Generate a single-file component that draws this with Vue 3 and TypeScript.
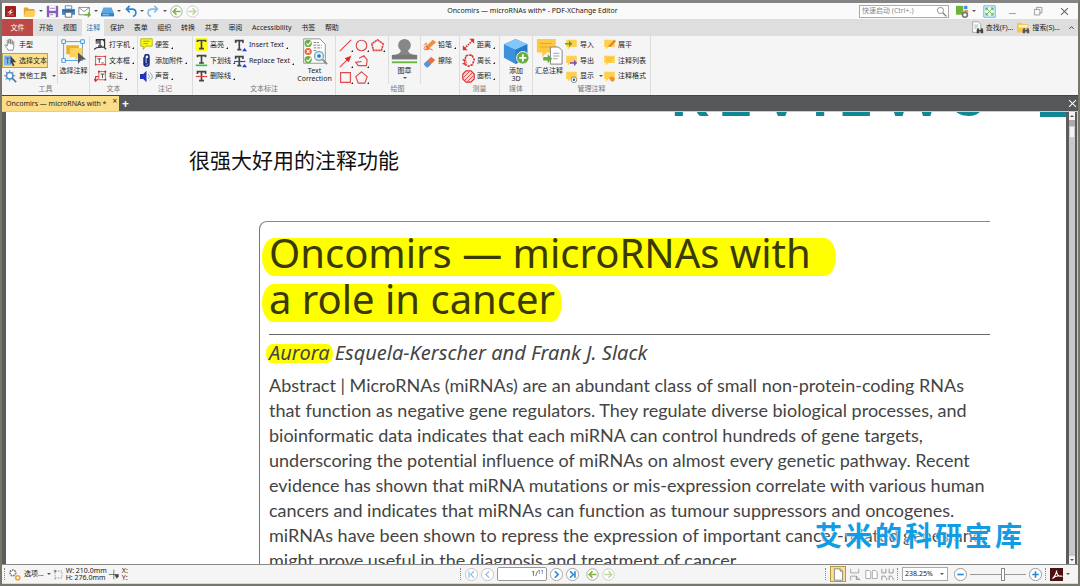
<script setup lang="ts">
import { ref } from 'vue'

interface Tool {
  icon: string
  label: string
  mark?: 'corner' | 'caret'
  active?: boolean
}

const note = 'M1.5 2h13v9h-8l-3 3v-3h-2z'
const icons: Record<string, string> = {
  logo: '<rect width="16" height="16" rx="1" fill="#a31f1c"/><path d="M3 10l8-6-3 5 5-1-8 5 3-4z" fill="#fff"/><path d="M3 13h10" stroke="#e88" />',
  folder: '<path d="M1 3h5l1 2h7v9H1z" fill="#e0a526"/><path d="M3 7h13l-3 7H1z" fill="#ffce55"/>',
  save: '<path d="M1 1h14v14H1z" fill="#8461b4"/><path d="M4 1h8v6H4zM4 10h8v5H4z" fill="#fff"/><path d="M5 12h4M5 4h6" stroke="#8461b4"/>',
  print: '<path d="M4 1h8v4H4z" fill="#fff" stroke="#3c78b4"/><path d="M0 5h16v7H0z" fill="#4684c4"/><path d="M4 9h8v6H4z" fill="#fff" stroke="#555"/><path d="M1 7h14" stroke="#204e80"/>',
  mail: '<path d="M1 3h13v9H1z" fill="#fff" stroke="#777"/><path d="M1 3l6.500 5L14 3" fill="none" stroke="#777"/><path d="M8 11h4V8l4 4-4 4v-3H8z" fill="#6fb043"/>',
  scan: '<path d="M3 3h10l3 7H0z" fill="#58a8e8"/><path d="M0 10h16v4H0z" fill="#2f7fc6"/><path d="M2 12h8" stroke="#bfe0ff"/>',
  undo: '<path d="M3 5h7c6 0 6 8 1 9M7 1L3 5l4 4" fill="none" stroke="#2f86d0" stroke-width="2"/>',
  redo: '<path d="M13 5H6c-6 0-6 8-1 9M9 1l4 4-4 4" fill="none" stroke="#85bbe4" stroke-width="2"/>',
  back: '<circle cx="8" cy="8" r="7" fill="#fff" stroke="#999"/><path d="M13 8H4M8 4L4 8l4 4" fill="none" stroke="#7fb238" stroke-width="2"/>',
  forward: '<circle cx="8" cy="8" r="7" fill="#fff" stroke="#c4c4c4"/><path d="M3 8h9M8 4l4 4-4 4" fill="none" stroke="#bcd79a" stroke-width="2"/>',
  theme: '<path d="M0 1h9v11H0z" fill="#70b03c"/><path d="M10 1h4v4h-4z" fill="#3c8fdc"/><path d="M10 6h5v3h-5z" fill="#e99f43"/><circle cx="11" cy="12" r="3" fill="#fff" stroke="#777" stroke-width="2"/>',
  full: '<path d="M1 1h14v14H1z" fill="#e9f8ff" stroke="#36a9e8"/><path d="M3 3h4L3 7zM13 3H9l4 4zM3 13h4L3 9zM13 13H9l4-4z" fill="#69ad34"/><path d="M4 4l8 8M12 4l-8 8" stroke="#69ad34"/>',
  min: '<path d="M3 11h10" stroke="#777"/>',
  restore: '<path d="M2 5h8v8H2zM5 5V2h8v8h-3" fill="none" stroke="#777"/>',
  close: '<path d="M3 3l10 10M13 3L3 13" stroke="currentColor" stroke-width="1.500"/>',
  search: '<circle cx="6.500" cy="6.500" r="4.500" fill="none" stroke="#666"/><path d="M10 10l5 5" stroke="#666" stroke-width="1.500"/>',
  find: '<path d="M2 1h7l3 3v10H2z" fill="#fff" stroke="#999"/><path d="M4 5h5M4 7h5M4 9h3" stroke="#aaa"/><path d="M7 15v-4l1-2h2v2h2V9h2l1 2v4h-3v-2h-2v2z" fill="#444"/>',
  findFolder: '<path d="M0 2h6l1 2h7v10H0z" fill="#f3c64c"/><path d="M2 5h11v3H2z" fill="#fff2c4"/><path d="M7 15v-4l1-2h2v2h2V9h2l1 2v4h-3v-2h-2v2z" fill="#555"/>',
  up: '<path d="M3 11l5-5 5 5" fill="none" stroke="#333" stroke-width="2"/>',
  hand: '<path d="M5 15c-1-3-3-4-4-6 1-1 2-1 3 1V3c0-1 2-1 2 0v4V2c0-1 2-1 2 0v5-4c0-1 2-1 2 0v5-3c0-1 2-1 2 0v6c0 2-1 3-1 4z" fill="#fff" stroke="#777"/>',
  selText: '<path d="M0 2h9v12H0z" fill="#7fb6e8"/><path d="M2 5h5M4.500 5v7" stroke="#245d94"/><path d="M8 2l7 8H11l2 4-2 1-2-4-1 2z" fill="#444"/>',
  gearTool: '<circle cx="7" cy="7" r="4" fill="#fff" stroke="#4b98d2" stroke-width="2"/><path d="M7 0v3M7 11v3M0 7h3M11 7h3M2 2l2 2M10 10l2 2M12 2l-2 2M4 10l-2 2" stroke="#777"/><path d="M10 10l5 5" stroke="#4c7fa8" stroke-width="2"/>',
  typewriter: '<path d="M2 2h5v5H2z" fill="#777"/><path d="M3 4V2h9v2M7.500 2v8M5 10h5" fill="none" stroke="#333" stroke-width="1.500"/><path d="M0 14l3-2 9-1 3 3M13 1v12" fill="none" stroke="#333" stroke-width="1.500"/>',
  textbox: '<path d="M2 3h12v10H2z" fill="#fff" stroke="#d33"/><path d="M1 2h2v2H1zM13 2h2v2h-2zM1 12h2v2H1zM13 12h2v2h-2z" fill="#d33"/><path d="M4 6h5M6.500 6v5M9 11h3" stroke="#333"/>',
  callout: '<path d="M6 2h8v10H6z" fill="#fff" stroke="#d33"/><path d="M8 5h5M10.500 5v5" stroke="#333"/><path d="M6 8H2v5M0 11l2 3 3-3" fill="none" stroke="#d33" stroke-width="1.500"/><path d="M5 1h2v2H5zM13 1h2v2h-2zM13 11h2v2h-2z" fill="#a22"/>',
  sticky: '<path d="M1 1h14v9H7l-3 4v-4H1z" fill="#ffff12" stroke="#aaa500"/><path d="M4 4h8M4 7h6" stroke="#8c8a10"/>',
  clip: '<path d="M5 4v8c0 4 6 4 6 0V3c0-3-5-3-5 0v8c0 2 3 2 3 0V5" fill="none" stroke="#1c2f80" stroke-width="2"/>',
  sound: '<path d="M0 5h4l4-4v14l-4-4H0z" fill="#2433bd"/><path d="M10 5c2 2 2 4 0 6M12 3c4 3 4 7 0 10" fill="none" stroke="#738bb8"/>',
  highlight: '<rect width="16" height="16" rx="2" fill="#ffff22"/><path d="M3 5V3h10v2M8 3v10M5 13h6" fill="none" stroke="#444" stroke-width="2"/>',
  underline: '<path d="M3 4V2h10v2M8 2v9M5 11h6" fill="none" stroke="#444" stroke-width="2"/><path d="M1 14h14" stroke="#2fc344" stroke-width="2"/>',
  strike: '<path d="M3 5V2h10v3M8 2v11M5 13h6" fill="none" stroke="#444" stroke-width="2"/><path d="M1 8h14" stroke="#e04444" stroke-width="1.500"/>',
  insert: '<path d="M2 5V2h9v3M6.500 2v11M4 13h5" fill="none" stroke="#444" stroke-width="2"/><path d="M10 15l3-4 3 4z" fill="#2536e0"/>',
  replace: '<path d="M2 5V2h9v3M6.500 2v11M4 13h5" fill="none" stroke="#444" stroke-width="2"/><path d="M0 8h14" stroke="#3646e0" stroke-width="1.500"/><path d="M10 15l3-4 3 4z" fill="#2536e0"/>',
  line: '<path d="M1 15L15 1" stroke="#e04848" stroke-width="1.400"/>',
  circle: '<circle cx="8" cy="8" r="6.500" fill="none" stroke="#e04848" stroke-width="1.400"/>',
  polyCloud: '<path d="M8 1l7 5-2 8H3L1 6z" fill="none" stroke="#e04848" stroke-width="2" stroke-dasharray="3 .6"/>',
  arrow: '<path d="M1 15L11 5" stroke="#e04848" stroke-width="1.400"/><path d="M15 1l-3 8-5-5z" fill="#e02828"/>',
  polyline: '<path d="M5 4l6-3 4 5-1 7H4L1 9l7-1" fill="none" stroke="#e04848" stroke-width="1.400"/>',
  square: '<path d="M2 2h12v12H2z" fill="none" stroke="#e04848" stroke-width="1.400"/>',
  pentagon: '<path d="M8 1l7 6-3 8H4L1 7z" fill="none" stroke="#e04848" stroke-width="1.400"/>',
  pencil: '<path d="M4 9L12 1l4 3-9 8-4 1z" fill="#ef9036"/><path d="M4 9l3 3" stroke="#c05a30"/><path d="M1 8C5 3 6 6 3 9s-2 5 2 4l4-1 3 2" fill="none" stroke="#d74f34"/>',
  eraser: '<path d="M1 11L10 2l5 4-9 9H4z" fill="#e77149"/><path d="M1 11l4-4 5 4-4 4H4z" fill="#4c9be0"/>',
  distance: '<path d="M3 13L13 3" stroke="#dc3333" stroke-width="2" stroke-dasharray="2 1"/><path d="M15 1v6L9 1zM1 15V9l6 6z" fill="#dc3333"/>',
  perimeter: '<path d="M4 6l1-4 7-1 3 6-2 6-5 2-6-3 4-2" fill="none" stroke="#dc3333" stroke-width="2" stroke-dasharray="3 1"/><path d="M0 6l6 1-3 3z" fill="#dc3333"/>',
  area: '<path d="M5 1h6l4 4v6l-4 4H5l-4-4V5z" fill="#fbd4d4" stroke="#dc3333" stroke-width="1.500"/><path d="M2 9l7-7M3 13L13 3M7 14l7-7" stroke="#dc3333"/>',
  noteImport: `<path d="${note}" fill="#ffcf4d"/><path d="M0 6h5V3l4 4-4 4V8H0z" fill="#5ea52f"/>`,
  noteExport: `<path d="${note}" fill="#ffcf4d"/><path d="M6 10h5V7l4 4-4 4v-3H6z" fill="#7a4fc0"/>`,
  noteShow: `<path d="${note}" fill="#ffcf4d"/><circle cx="11" cy="12" r="3.500" fill="#fff" stroke="#777"/><circle cx="11" cy="12" r="1.500" fill="#27639e"/>`,
  noteFlat: `<path d="${note}" fill="#ffcf4d"/><path d="M6 10l8-8 2 2-7 7z" fill="#e2813a"/>`,
  noteList: `<path d="${note}" fill="#ffcf4d"/><path d="M4 5h8M4 8h6" stroke="#f1b828"/>`,
  noteStyle: `<path d="${note}" fill="#ffcf4d"/><path d="M8 9c4-3 8 1 6 4s-6 1-6-4z" fill="#ef9231"/>`,
  gears: '<circle cx="6" cy="6" r="3.500" fill="#fff" stroke="#777" stroke-width="2" stroke-dasharray="2 1"/><circle cx="12" cy="12" r="2.500" fill="#fff" stroke="#eda539" stroke-width="2"/>',
  size: '<path d="M3 3h10v10H3z" fill="none" stroke="#666" stroke-dasharray="2 2"/><path d="M1 3h4M3 1v4M3 13v2" stroke="#555"/>',
  cross: '<path d="M0 8h14M7 1v14" stroke="#444"/><path d="M8 8h6v3l-3 3z" fill="#444"/>',
  first: '<circle cx="8" cy="8" r="7.500" fill="#fff" stroke="#bbb"/><path d="M5 4v8M11 4L7 8l4 4" fill="none" stroke="#8ec1ea" stroke-width="1.500"/>',
  prev: '<circle cx="8" cy="8" r="7.500" fill="#fff" stroke="#bbb"/><path d="M10 4L6 8l4 4" fill="none" stroke="#8ec1ea" stroke-width="1.500"/>',
  next: '<circle cx="8" cy="8" r="7.500" fill="#fff" stroke="#999"/><path d="M6 4l4 4-4 4" fill="none" stroke="#2689d8" stroke-width="2"/>',
  last: '<circle cx="8" cy="8" r="7.500" fill="#fff" stroke="#999"/><path d="M5 4l4 4-4 4M11 4v8" fill="none" stroke="#2689d8" stroke-width="2"/>',
  minus: '<circle cx="8" cy="8" r="7.500" fill="#fff" stroke="#888"/><path d="M4 8h8" stroke="#2689d8" stroke-width="2"/>',
  plus: '<circle cx="8" cy="8" r="7.500" fill="#fff" stroke="#888"/><path d="M4 8h8M8 4v8" stroke="#2689d8" stroke-width="2"/>',
  pageOne: '<path d="M3 1h7l3 3v11H3z" fill="#fff" stroke="#777"/><path d="M10 1v3h3" fill="none" stroke="#777"/>',
  pageFlow: '<path d="M2 1v5h10V1M2 15v-5h7l4 4v1" fill="none" stroke="#999"/><path d="M9 10v4h4" fill="none" stroke="#777"/>',
  pageTwo: '<path d="M1 3h4l2 2v8H1zM9 3h4l2 2v8H9z" fill="#fff" stroke="#999"/>',
  pageTwoFlow: '<path d="M1 1v5h5V1M10 1v5h5V1M1 15v-5h4l2 3v2M10 15v-5h3l2 3v2" fill="none" stroke="#888"/>',
  pdf: '<rect width="16" height="16" fill="#4c1010"/><path d="M3 13c4-4 5-6 5-10 0 5 3 8 6 7-4-1-8 0-11 3z" fill="none" stroke="#fff" stroke-width="1.300"/>',
  bigSelect: '<path d="M4 4h21v21H4z" fill="none" stroke="#4b9cdb"/><path d="M7 8h14v10h-6l-4 4v-4H7z" fill="#e9b02c"/><path d="M11 11h14v10h-4l-4 4v-4h-6z" fill="#ffd25a"/><path d="M2 2h4v4H2zM23 2h4v4h-4zM2 23h4v4H2z" fill="#fff" stroke="#338ed8"/><path d="M20 16l9 8h-5l-4 5z" fill="#555"/>',
  bigText: '<path d="M3 1h18l6 6v21H3z" fill="#fff" stroke="#888"/><circle cx="8" cy="6" r="4" fill="#68b045"/><circle cx="8" cy="15" r="4" fill="#ee663f"/><circle cx="8" cy="24" r="4" fill="#68b045"/><path d="M6 6l2 2 3-4M6 24l2 2 3-4M6.500 13.500l3 3M9.500 13.500l-3 3" fill="none" stroke="#fff" stroke-width="1.300"/><path d="M14 5h6M14 8h9M14 11h9M14 14h4" stroke="#777" stroke-dasharray="3 1"/><circle cx="20" cy="20" r="5" fill="#d9f1ff" stroke="#8aa" stroke-width="1.500"/><circle cx="20" cy="20" r="2" fill="#2877bd"/><path d="M24 24l5 5" stroke="#888" stroke-width="2"/>',
  bigStamp: '<circle cx="15" cy="8" r="7" fill="#878787"/><path d="M11 13h8c0 4 3 5 10 6v5H1v-5c7-1 10-2 10-6z" fill="#858585"/><path d="M1 19h28v4H1z" fill="#777"/><path d="M1 26h28v2H1z" fill="#65b63d"/>',
  bigCube: '<path d="M14 1l13 6v15l-13 7-13-7V7z" fill="#3c91dd"/><path d="M14 1l13 6-13 6L1 7z" fill="#83c6fa"/><path d="M14 13l13-6v15l-13 7z" fill="#257bc7"/><circle cx="22" cy="22" r="7" fill="#68ae3e" stroke="#fff"/><path d="M18 22h8M22 18v8" stroke="#fff" stroke-width="2"/>',
  bigSum: '<path d="M1 1h21v15H12l-5 5v-5H1z" fill="#ffc943"/><path d="M4 6h14M4 10h12" stroke="#e2a623"/><path d="M16 10h9l4 4v15H16z" fill="#fff" stroke="#777"/><path d="M19 17h7M19 20h7M19 23h5" stroke="#999"/><path d="M8 17v4h5v-3l5 5-5 5v-3H8z" fill="#65ae3a"/>',
}

const quick = [
  { icon: 'folder', label: '打开', caret: true },
  { icon: 'save', label: '保存', caret: false },
  { icon: 'print', label: '打印', caret: false },
  { icon: 'mail', label: '邮件', caret: true },
  { icon: 'scan', label: '扫描', caret: true },
  { icon: 'undo', label: '撤销', caret: true },
  { icon: 'redo', label: '重做', caret: true },
  { icon: 'back', label: '后退', caret: false },
  { icon: 'forward', label: '前进', caret: false },
]

const tabs = ['开始', '视图', '注释', '保护', '表单', '组织', '转换', '共享', '审阅', 'Accessibility', '书签', '帮助']
const activeTab = ref('注释')

const col = (...t: Tool[]) => t
const c = 'corner' as const
const toolCol = col({ icon: 'hand', label: '手型' }, { icon: 'selText', label: '选择文本', active: true }, { icon: 'gearTool', label: '其他工具', mark: 'caret' })
const textCol = col({ icon: 'typewriter', label: '打字机', mark: c }, { icon: 'textbox', label: '文本框', mark: c }, { icon: 'callout', label: '标注', mark: c })
const noteCol = col({ icon: 'sticky', label: '便签', mark: c }, { icon: 'clip', label: '添加附件', mark: c }, { icon: 'sound', label: '声音', mark: c })
const markCol = col({ icon: 'highlight', label: '高亮', mark: c }, { icon: 'underline', label: '下划线', mark: c }, { icon: 'strike', label: '删除线', mark: c })
const editCol = col({ icon: 'insert', label: 'Insert Text', mark: c }, { icon: 'replace', label: 'Replace Text', mark: c })
const penCol = col({ icon: 'pencil', label: '铅笔', mark: c }, { icon: 'eraser', label: '擦除' })
const measureCol = col({ icon: 'distance', label: '距离', mark: c }, { icon: 'perimeter', label: '周长', mark: c }, { icon: 'area', label: '面积', mark: c })
const ioCol = col({ icon: 'noteImport', label: '导入' }, { icon: 'noteExport', label: '导出' }, { icon: 'noteShow', label: '显示', mark: 'caret' })
const manageCol = col({ icon: 'noteFlat', label: '展平' }, { icon: 'noteList', label: '注释列表' }, { icon: 'noteStyle', label: '注释格式' })

interface Part { kind: 'col' | 'big' | 'shapes'; cls: string; tools?: Tool[]; icon?: string; lines?: string[]; caret?: boolean }
interface Group { label: string; parts: Part[] }
const groups: Group[] = [
  { label: '工具', parts: [{ kind: 'col', cls: 'w-tool', tools: toolCol }, { kind: 'big', cls: 'w-sm split', icon: 'bigSelect', lines: ['选择注释'] }] },
  { label: '文本', parts: [{ kind: 'col', cls: 'w-text', tools: textCol }] },
  { label: '注记', parts: [{ kind: 'col', cls: 'w-note', tools: noteCol }] },
  { label: '文本标注', parts: [{ kind: 'col', cls: 'w-mark', tools: markCol }, { kind: 'col', cls: 'w-edit', tools: editCol }, { kind: 'big', cls: 'w-lg', icon: 'bigText', lines: ['Text', 'Correction'] }] },
  { label: '绘图', parts: [{ kind: 'shapes', cls: 'w-shape' }, { kind: 'big', cls: 'w-sm split', icon: 'bigStamp', lines: ['图章'], caret: true }, { kind: 'col', cls: 'w-pen split', tools: penCol }] },
  { label: '测量', parts: [{ kind: 'col', cls: 'w-pen', tools: measureCol }] },
  { label: '媒体', parts: [{ kind: 'big', cls: 'w-sm', icon: 'bigCube', lines: ['添加', '3D'] }] },
  { label: '管理注释', parts: [{ kind: 'big', cls: 'w-sm', icon: 'bigSum', lines: ['汇总注释'] }, { kind: 'col', cls: 'w-io', tools: ioCol }, { kind: 'col', cls: 'w-text tight', tools: manageCol }] },
]
const shapes = [
  ['line', '直线'], ['circle', '椭圆'], ['polyCloud', '云形'],
  ['arrow', '箭头'], ['polyline', '折线'], ['', ''],
  ['square', '矩形'], ['pentagon', '多边形'],
]

const abstract = [
  'Abstract | MicroRNAs (miRNAs) are an abundant class of small non-protein-coding RNAs',
  'that function as negative gene regulators. They regulate diverse biological processes, and',
  'bioinformatic data indicates that each miRNA can control hundreds of gene targets,',
  'underscoring the potential influence of miRNAs on almost every genetic pathway. Recent',
  'evidence has shown that miRNA mutations or mis-expression correlate with various human',
  'cancers and indicates that miRNAs can function as tumour suppressors and oncogenes.',
  'miRNAs have been shown to repress the expression of important cancer-related genes and',
  'might prove useful in the diagnosis and treatment of cancer.',
]
const masthead = [...'REVIEWS']
const watermark = [...'艾米的科研宝库']
const quickLaunch = ref('')
const pageNo = ref('1')
const zoom = ref('238.25%')
const zoomPos = ref(60)
const views = [['pageOne', '单页'], ['pageFlow', '连续'], ['pageTwo', '双页'], ['pageTwoFlow', '双页连续']]
</script>

<template>
  <div class="window">
    <header class="titlebar">
      <div class="quick">
        <svg class="ic logo" viewBox="0 0 16 16" v-html="icons.logo" />
        <button v-for="q in quick" :key="q.icon" class="qbtn" :aria-label="q.label">
          <svg class="ic" viewBox="0 0 16 16" v-html="icons[q.icon]" />
          <i v-if="q.caret" class="caret" />
        </button>
      </div>
      <div class="title">Oncomirs — microRNAs with* - PDF-XChange Editor</div>
      <div class="winctl">
        <label class="launch">
          <input v-model="quickLaunch" type="text" placeholder="快速启动 (Ctrl+.)" aria-label="快速启动" />
          <svg class="ic-s" viewBox="0 0 16 16" v-html="icons.search" />
        </label>
        <button class="qbtn" aria-label="界面选项"><svg class="ic" viewBox="0 0 16 16" v-html="icons.theme" /><i class="caret" /></button>
        <button class="qbtn" aria-label="全屏"><svg class="ic" viewBox="0 0 16 16" v-html="icons.full" /></button>
        <button class="sys" aria-label="最小化"><svg class="ic-s" viewBox="0 0 16 16" v-html="icons.min" /></button>
        <button class="sys" aria-label="还原"><svg class="ic-s" viewBox="0 0 16 16" v-html="icons.restore" /></button>
        <button class="sys" aria-label="关闭"><svg class="ic-s" viewBox="0 0 16 16" v-html="icons.close" /></button>
      </div>
    </header>

    <nav class="menubar">
      <button class="file">文件</button>
      <div class="tabs">
        <button v-for="t in tabs" :key="t" :class="{ on: t === activeTab }" @click="activeTab = t">{{ t }}</button>
      </div>
      <div class="finders">
        <button><svg class="ic" viewBox="0 0 16 16" v-html="icons.find" />查找(F)...</button>
        <button><svg class="ic" viewBox="0 0 16 16" v-html="icons.findFolder" />搜索(S)...</button>
        <button class="fold" aria-label="折叠功能区"><svg class="ic-xs" viewBox="0 0 16 16" v-html="icons.up" /></button>
      </div>
    </nav>

    <section class="ribbon">
      <div v-for="g in groups" :key="g.label" class="group">
        <div class="parts">
          <div v-for="(p, i) in g.parts" :key="i" :class="['part', p.kind, p.cls]">
            <template v-if="p.kind === 'col'">
              <button v-for="t in p.tools" :key="t.label" class="tool" :class="{ active: t.active }">
                <svg class="ic" viewBox="0 0 16 16" v-html="icons[t.icon]" />
                <span>{{ t.label }}</span>
                <i v-if="t.mark" :class="t.mark" />
              </button>
            </template>
            <button v-else-if="p.kind === 'big'" class="bigtool">
              <svg class="ic-l" viewBox="0 0 30 30" v-html="icons[p.icon ?? '']" />
              <span v-for="l in p.lines" :key="l">{{ l }}</span>
              <i v-if="p.caret" class="caret" />
            </button>
            <template v-else>
              <template v-for="(s, n) in shapes" :key="n">
                <button v-if="s[0]" class="shape" :aria-label="s[1]"><svg class="ic" viewBox="0 0 16 16" v-html="icons[s[0]]" /><i class="corner" /></button>
                <span v-else />
              </template>
            </template>
          </div>
        </div>
        <div class="glabel">{{ g.label }}</div>
      </div>
    </section>

    <div class="doctabs">
      <div class="doctab"><span>Oncomirs — microRNAs with *</span><button aria-label="关闭标签页">×</button></div>
      <button class="add" aria-label="新建标签页">+</button>
      <button class="closeall" aria-label="关闭文档"><svg class="ic-s" viewBox="0 0 16 16" v-html="icons.close" /></button>
    </div>

    <main class="viewer">
      <div class="page">
        <div class="masthead">
          <div class="letters"><span v-for="(l, i) in masthead" :key="i">{{ l }}</span></div>
          <div class="block" />
        </div>
        <p class="annot">很强大好用的注释功能</p>
        <article class="paper">
          <h1><mark>Oncomirs — microRNAs with</mark><br /><mark class="second">a role in cancer</mark></h1>
          <p class="authors"><mark>Aurora</mark> Esquela-Kerscher and Frank J. Slack</p>
          <p class="abstract"><span v-for="l in abstract" :key="l">{{ l }}</span></p>
        </article>
        <div class="watermark"><span v-for="(w, i) in watermark" :key="i">{{ w }}</span></div>
      </div>
      <div class="scroll">
        <button aria-label="向上滚动"><i class="tri up" /></button>
        <div class="thumb" />
        <button class="split-h" aria-label="拆分" />
        <div class="track" />
        <button aria-label="向下滚动"><i class="tri" /></button>
      </div>
    </main>

    <footer class="status">
      <div class="st-left">
        <i class="grip" />
        <button class="opt"><svg class="ic" viewBox="0 0 16 16" v-html="icons.gears" />选项...<i class="caret" /></button>
        <svg class="ic-s" viewBox="0 0 16 16" v-html="icons.size" />
        <div class="dims"><span>W: 210.0mm</span><span>H: 276.0mm</span></div>
        <svg class="ic-s" viewBox="0 0 16 16" v-html="icons.cross" />
        <div class="dims"><span>X:</span><span>Y:</span></div>
      </div>
      <div class="st-mid">
        <i class="grip" />
        <button v-for="n in ['first', 'prev']" :key="n" :aria-label="n"><svg class="ic" viewBox="0 0 16 16" v-html="icons[n]" /></button>
        <label class="pageno"><input v-model="pageNo" type="text" aria-label="页码" /><span>/</span><small>11</small></label>
        <button v-for="n in ['next', 'last']" :key="n" :aria-label="n"><svg class="ic" viewBox="0 0 16 16" v-html="icons[n]" /></button>
        <button class="hist" aria-label="上一视图"><svg class="ic" viewBox="0 0 16 16" v-html="icons.back" /></button>
        <button aria-label="下一视图"><svg class="ic" viewBox="0 0 16 16" v-html="icons.forward" /></button>
      </div>
      <div class="st-right">
        <i class="grip" />
        <button v-for="(v, i) in views" :key="v[0]" class="view" :class="{ on: i === 0 }" :aria-label="v[1]"><svg class="ic" viewBox="0 0 16 16" v-html="icons[v[0]]" /></button>
        <i class="grip" />
        <label class="zoom"><select v-model="zoom" aria-label="缩放比例"><option>238.25%</option><option>100%</option></select><i class="caret" /></label>
        <button aria-label="缩小"><svg class="ic" viewBox="0 0 16 16" v-html="icons.minus" /></button>
        <input v-model="zoomPos" class="slider" type="range" min="0" max="100" aria-label="缩放" />
        <button aria-label="放大"><svg class="ic" viewBox="0 0 16 16" v-html="icons.plus" /></button>
        <i class="grip" />
        <button class="opt" aria-label="PDF"><svg class="ic" viewBox="0 0 16 16" v-html="icons.pdf" /><i class="caret" /></button>
      </div>
    </footer>
  </div>
</template>

<style>
body { margin: 0; overflow: hidden; }
</style>

<style scoped>
* { box-sizing: border-box; }
.window {
  display: flex; flex-direction: column; height: 100vh;
  border: 2px solid #77776c; border-top: 3px solid #858585;
  background: #f5f5f5; color: #222;
  font-family: "Noto Sans", "Noto Sans CJK SC", sans-serif; font-size: 7px; line-height: 8px;
}
button, input, select { font: inherit; color: inherit; margin: 0; padding: 0; border: 0; background: none; }
button { display: flex; align-items: center; white-space: nowrap; }
svg { display: block; flex: none; }
.ic { width: 13px; height: 13px; }
.ic-s { width: 11px; height: 11px; }
.ic-xs { width: 7px; height: 7px; }
.ic-l { width: 27px; height: 27px; }
.caret { width: 0; height: 0; flex: none; border: 2px solid transparent; border-top-color: #555; border-bottom: 0; }
.corner { width: 0; height: 0; flex: none; align-self: flex-end; margin: 0 0 4px; border-left: 2px solid transparent; border-bottom: 2px solid #222; }

.titlebar { display: grid; grid-template-columns: 1fr auto 1fr; align-items: center; height: 16px; flex: none; background: #fafafa; padding: 0 4px 0 3px; }
.quick { display: flex; align-items: center; gap: 3px; }
.logo { width: 11px; height: 11px; margin-right: 4px; }
.qbtn { gap: 3px; }
.title { margin-right: 14px; }
.winctl { display: flex; align-items: center; justify-content: flex-end; gap: 7px; color: #666; }
.launch { display: flex; align-items: center; width: 90px; height: 13px; padding: 0 1px 0 2px; border: 1px solid #aaa; background: #fff; }
.launch input { flex: 1; min-width: 0; outline: 0; }
.launch input::placeholder { color: #888; }
.sys { width: 19px; height: 13px; justify-content: center; }

.menubar { display: flex; height: 17px; flex: none; background: #dedede; }
.file { width: 31px; justify-content: center; background: #b94a48; color: #fff; }
.tabs { display: flex; justify-content: space-between; width: 308px; margin-left: 2px; }
.tabs button { padding: 0 4px; }
.tabs .on { background: #f5f5f5; color: #2573ae; }
.finders { display: flex; gap: 4px; margin-left: auto; padding-right: 3px; }
.finders button { gap: 2px; }
.finders .fold { margin-left: 4px; }

.ribbon { display: flex; flex: none; background: #f5f5f5; }
.group { display: flex; flex-direction: column; border-right: 1px solid #dcdcdc; }
.parts { display: flex; flex: 1; }
.glabel { height: 11px; text-align: center; color: #777; line-height: 9px; }
.part { height: 48px; }
.col { display: flex; flex-direction: column; padding: 1px 0 0 2px; }
.split { border-left: 1px solid #dcdcdc; }
.tool { height: 16px; gap: 2px; align-self: flex-start; }
.tool .caret { margin-left: 3px; }
.tool.active { align-self: stretch; margin-left: -2px; margin-right: 9px; padding-left: 1px; border: 1px solid #b9a14f; background: #fde08b; }
.w-tool { width: 55px; }
.w-sm { width: 32px; }
.w-text { width: 47px; padding-left: 4px; }
.w-text.tight { padding-left: 0; }
.w-note { width: 54px; }
.w-mark { width: 41px; }
.w-edit { width: 60px; padding-left: 0; }
.w-lg { width: 41px; }
.w-pen { width: 39px; }
.w-io { width: 38px; padding-left: 0; }
.w-shape { display: grid; grid-template-columns: repeat(3, 16px); grid-template-rows: repeat(3, 16px); padding: 1px 0 0 3px; width: 52px; }
.shape .corner { margin-left: -1px; margin-bottom: 1px; }
.bigtool { flex-direction: column; width: 100%; padding-top: 2px; }
.bigtool .ic-l { margin-bottom: 2px; }
.bigtool .caret { margin-top: 2px; }

.doctabs { display: flex; height: 17px; flex: none; background: #565758; border-top: 1px solid #444; border-bottom: 1px solid #e4cf86; color: #fff; }
.doctab { display: flex; justify-content: space-between; align-items: center; width: 117px; padding: 0 2px 0 4px; background: #fbdd88; color: #222; }
.doctab button { align-self: flex-start; line-height: 9px; font-size: 8px; }
.add { padding: 0 3px; font-size: 12px; font-weight: 700; }
.closeall { margin-left: auto; }

.viewer { display: flex; flex: 1; min-height: 0; background: #5c5c5c; padding-left: 4px; border-bottom: 1px solid #888; }
.page { position: relative; flex: 1; min-width: 0; overflow: hidden; background: #fff; }
.masthead { display: flex; justify-content: flex-end; height: 5px; overflow: hidden; }
.letters { display: flex; justify-content: space-between; align-items: flex-end; width: 316px; color: #0f8795; font: 700 60px/60px Lato, sans-serif; height: 5px; }
.letters span { margin-bottom: -6px; }
.block { width: 26px; margin-left: 54px; background: #0f8795; }
.annot { margin: 0 0 0 183px; padding-top: 26px; font-size: 21px; line-height: 32px; color: #111; font-family: "Noto Sans CJK SC", sans-serif; }
.paper { margin: 46px 76px 0 253px; padding: 0 0 0 9px; border-top: 1px solid #888; border-left: 1px solid #777; border-top-left-radius: 8px; color: #444; }
h1 { margin: 0; padding: 8px 0 12px; border-bottom: 1px solid #666; font-family: "Noto Sans", sans-serif; font-size: 40px; line-height: 46px; font-weight: 400; white-space: nowrap; }
mark { color: inherit; background: #ff0; }
h1 mark { display: inline-block; height: 38px; margin: 8px 0 0 -7px; padding: 0 25px 0 7px; line-height: 30px; border-radius: 12px / 19px; color: #3a3a08; vertical-align: top; }
h1 .second { padding-right: 7px; }
.authors { margin: 5px 0 0; font-family: "Noto Sans", sans-serif; font-size: 20px; line-height: 26px; font-style: italic; white-space: nowrap; }
.authors mark { display: inline-block; height: 19px; line-height: 18px; margin: 0 -3px; padding: 0 3px; border-radius: 6px / 9px; }
.abstract { margin: 7px 0 0; font-family: Lato, sans-serif; font-size: 18px; line-height: 25px; font-variant-ligatures: none; }
.abstract span { display: block; white-space: nowrap; }
.watermark { position: absolute; right: 44px; bottom: 11px; display: flex; gap: 3px; color: #129ce4; font: 700 27px/36px "Noto Sans CJK SC", sans-serif; text-shadow: 0 0 2px #fff, 0 0 3px #fff; }

.scroll { display: flex; flex-direction: column; width: 12px; padding: 0 2px 0 3px; background: #5c5c5c; border-right: 1px solid #d8cf98; }
.scroll button { height: 8px; justify-content: center; background: #f4f4f4; }
.tri { width: 0; height: 0; border: 2px solid transparent; border-top-color: #555; border-bottom: 0; }
.tri.up { border-top: 0; border-bottom: 2px solid #555; }
.thumb { height: 6px; background: #aaa; }
.scroll .split-h { height: 12px; border: 1px solid #ccc; }
.track { flex: 1; background: #c8c8c8; }

.status { display: grid; grid-template-columns: 1fr auto 1fr; align-items: center; height: 19px; flex: none; background: #f5f5f5; border-bottom: 1px solid #e2dcae; }
.status > div { display: flex; align-items: center; gap: 3px; }
.status .st-left { gap: 2px; padding-left: 2px; }
.status .st-mid { margin-right: 6px; }
.status .st-right { justify-content: flex-end; padding-right: 8px; }
.grip { width: 2px; height: 12px; border-left: 1px dotted #888; }
.opt { gap: 3px; }
.dims { display: flex; flex-direction: column; line-height: 7px; }
.pageno { display: flex; align-items: center; width: 50px; height: 14px; padding-right: 2px; border: 1px solid #999; border-radius: 2px; background: #fff; }
.pageno input { flex: 1; min-width: 0; text-align: right; outline: 0; }
.pageno small { font-size: 5px; line-height: 5px; align-self: flex-start; padding-top: 2px; }
.hist { margin-left: 4px; }
.view { height: 16px; justify-content: center; }
.view.on { width: 16px; border: 1px solid #b39b45; background: #f8df94; }
.zoom { display: flex; align-items: center; width: 46px; height: 14px; margin-right: 3px; padding: 0 3px 0 2px; border: 1px solid #aaa; background: #fff; }
.zoom select { flex: 1; min-width: 0; appearance: none; outline: 0; }
.slider { width: 56px; height: 14px; appearance: none; background: linear-gradient(#999, #999) center / 100% 1px no-repeat; }
.slider::-webkit-slider-thumb { appearance: none; width: 4px; height: 13px; border: 1px solid #888; background: #fff; }
</style>
